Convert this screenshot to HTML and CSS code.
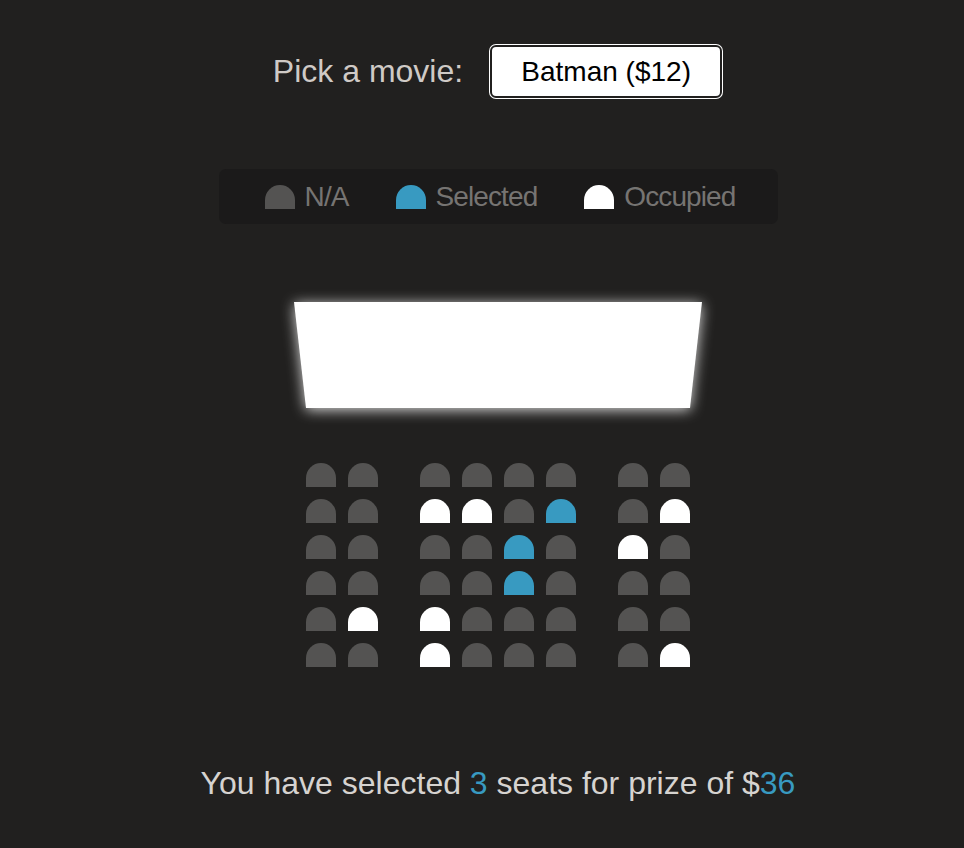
FILE: index.html
```html
<!DOCTYPE html>
<html lang="en">
<head>
<meta charset="utf-8">
<title>Movie Seat Booking</title>
<link rel="stylesheet" href="styles.css">
</head>
<body>
  <div class="movie-container">
    <label class="movie-label" for="movie">Pick a movie:</label>
    <select id="movie" class="movie-select">
      <option value="12">Batman ($12)</option>
    </select>
  </div>

  <ul class="showcase">
    <li class="showcase-item"><span class="seat"></span><small class="showcase-text">N/A</small></li>
    <li class="showcase-item"><span class="seat selected"></span><small class="showcase-text">Selected</small></li>
    <li class="showcase-item"><span class="seat occupied"></span><small class="showcase-text">Occupied</small></li>
  </ul>

  <div class="cinema">
    <div class="screen-glow"><div class="screen"></div></div>

    <div class="seats">
      <div class="row">
        <span class="seat"></span><span class="seat"></span>
        <span class="seat"></span><span class="seat"></span><span class="seat"></span><span class="seat"></span>
        <span class="seat"></span><span class="seat"></span>
      </div>
      <div class="row">
        <span class="seat"></span><span class="seat"></span>
        <span class="seat occupied"></span><span class="seat occupied"></span><span class="seat"></span><span class="seat selected"></span>
        <span class="seat"></span><span class="seat occupied"></span>
      </div>
      <div class="row">
        <span class="seat"></span><span class="seat"></span>
        <span class="seat"></span><span class="seat"></span><span class="seat selected"></span><span class="seat"></span>
        <span class="seat occupied"></span><span class="seat"></span>
      </div>
      <div class="row">
        <span class="seat"></span><span class="seat"></span>
        <span class="seat"></span><span class="seat"></span><span class="seat selected"></span><span class="seat"></span>
        <span class="seat"></span><span class="seat"></span>
      </div>
      <div class="row">
        <span class="seat"></span><span class="seat occupied"></span>
        <span class="seat occupied"></span><span class="seat"></span><span class="seat"></span><span class="seat"></span>
        <span class="seat"></span><span class="seat"></span>
      </div>
      <div class="row">
        <span class="seat"></span><span class="seat"></span>
        <span class="seat occupied"></span><span class="seat"></span><span class="seat"></span><span class="seat"></span>
        <span class="seat"></span><span class="seat occupied"></span>
      </div>
    </div>
  </div>

  <p class="summary">You have selected <span class="accent">3</span> seats for prize of $<span class="accent">36</span></p>
</body>
</html>
```

FILE: styles.css
```css
* {
  box-sizing: border-box;
}

body {
  margin: 0;
  padding: 44px 0 0 32px;
  min-height: 848px;
  background: #21201f;
  color: #d6d3d0;
  font-family: "Liberation Sans", Arial, sans-serif;
  display: flex;
  flex-direction: column;
  align-items: center;
}

.movie-container {
  display: flex;
  align-items: center;
  height: 55px;
}

.movie-label {
  font-size: 32px;
  color: #cfcac6;
  margin-right: 26px;
}

.movie-select {
  appearance: none;
  -webkit-appearance: none;
  width: 232px;
  height: 53px;
  margin: 1px;
  border: 2px solid #21201f;
  border-radius: 6px;
  box-shadow: 0 0 0 1px #ffffff;
  background: #ffffff;
  color: #000000;
  font-family: "Liberation Sans", Arial, sans-serif;
  font-size: 28px;
  text-align: center;
  text-align-last: center;
  padding: 0;
  outline: none;
}

.showcase {
  list-style: none;
  margin: 70px 0 0 0;
  padding: 0 0 0 4px;
  width: 559px;
  height: 55px;
  background: #1b1a1a;
  border-radius: 7px;
  display: flex;
  justify-content: center;
  align-items: center;
  gap: 47px;
}

.showcase-item {
  display: flex;
  align-items: center;
  gap: 10px;
}

.showcase-text {
  font-size: 28px;
  letter-spacing: -0.9px;
  color: #767472;
}

.seat {
  display: block;
  width: 30px;
  height: 24px;
  background: #545352;
  border-top-left-radius: 15px 15px;
  border-top-right-radius: 15px 15px;
}

.seat.selected {
  background: #389ac1;
}

.seat.occupied {
  background: #ffffff;
}

.cinema {
  display: flex;
  flex-direction: column;
  align-items: center;
  margin-top: 78px;
}

.screen-glow {
  filter: drop-shadow(0 2px 7px rgba(255, 255, 255, 0.85));
}

.screen {
  width: 408px;
  height: 106px;
  background: #ffffff;
  clip-path: polygon(0 0, 100% 0, 97.06% 100%, 2.94% 100%);
}

.seats {
  margin-top: 55px;
  display: flex;
  flex-direction: column;
  gap: 12px;
}

.row {
  display: flex;
  gap: 12px;
}

.row .seat:nth-child(2),
.row .seat:nth-child(6) {
  margin-right: 30px;
}

.summary {
  margin: 98px 0 0 0;
  font-size: 32px;
  color: #d6d3d0;
}

.accent {
  color: #389ac1;
}
```
